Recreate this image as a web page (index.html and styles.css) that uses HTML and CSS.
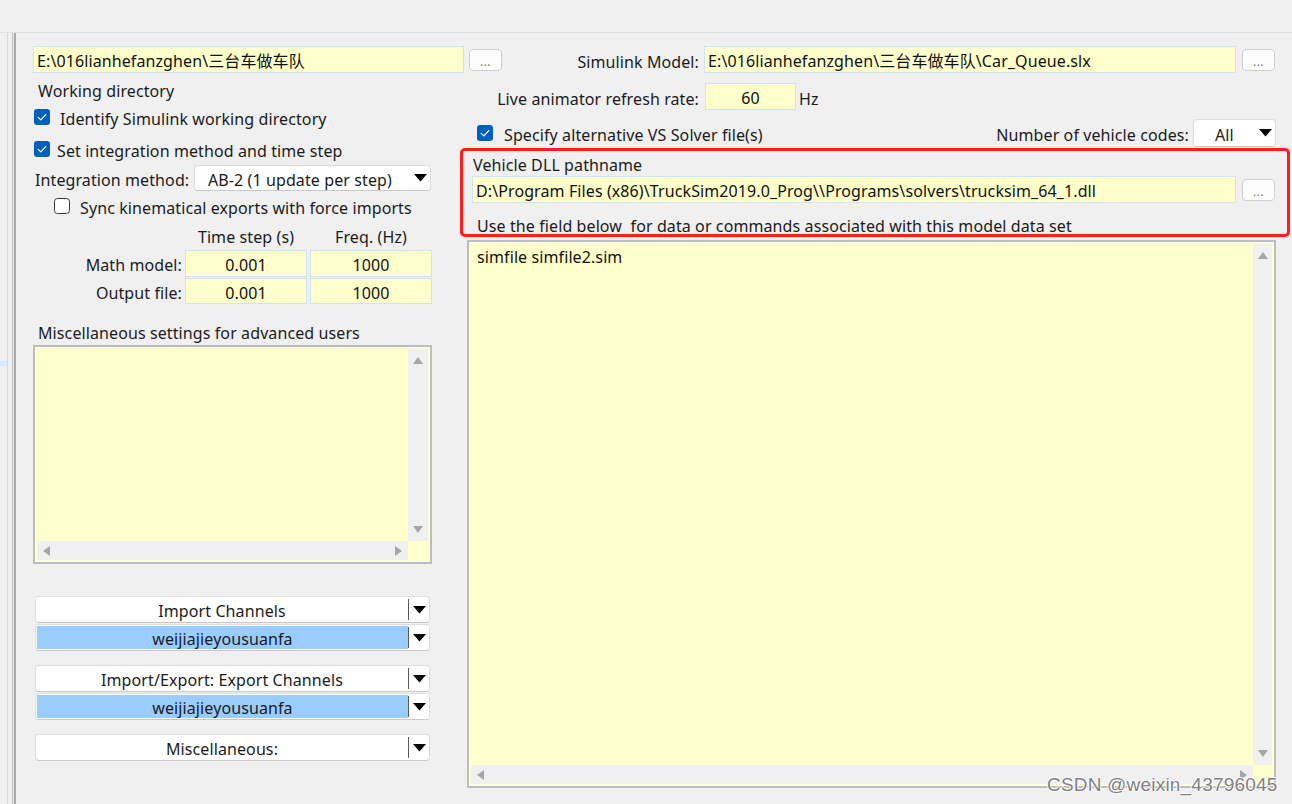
FILE: index.html
```html
<!DOCTYPE html>
<html>
<head>
<meta charset="utf-8">
<title>Model settings</title>
<link rel="stylesheet" href="styles.css">
</head>
<body>
<div class="topbar"></div>
<div class="main">
  <div class="strip"><div class="strip-sel"></div></div>
  <div class="content">
    <div class="col-left">
      <div class="row-path">
        <div class="field path-left">E:\016lianhefanzghen\三台车做车队</div>
        <div class="btn">...</div>
      </div>
      <div class="label wd">Working directory</div>
      <div class="check-row c1">
        <svg class="cb" width="16" height="16" viewBox="0 0 16 16"><rect x="0" y="0" width="16" height="16" rx="3" fill="#005fb8"/><path d="M4.2 8.4 L6.8 10.9 L11.8 5.6" fill="none" stroke="#fff" stroke-width="1.3" stroke-linecap="round" stroke-linejoin="round"/></svg>
        <span class="ct ct1">Identify Simulink working directory</span>
      </div>
      <div class="check-row c2">
        <svg class="cb" width="16" height="16" viewBox="0 0 16 16"><rect x="0" y="0" width="16" height="16" rx="3" fill="#005fb8"/><path d="M4.2 8.4 L6.8 10.9 L11.8 5.6" fill="none" stroke="#fff" stroke-width="1.3" stroke-linecap="round" stroke-linejoin="round"/></svg>
        <span class="ct ct2">Set integration method and time step</span>
      </div>
      <div class="int-row">
        <span class="int-label">Integration method:</span>
        <div class="combo int-combo">
          <span class="combo-text">AB-2 (1 update per step)</span>
          <svg class="arrow" width="13" height="8" viewBox="0 0 13 8"><polygon points="0,0 13,0 6.5,7.5" fill="#000"/></svg>
        </div>
      </div>
      <div class="check-row sync">
        <svg class="cb" width="16" height="16" viewBox="0 0 16 16"><rect x="0.5" y="0.5" width="15" height="15" rx="3" fill="#fff" stroke="#3a3a3a" stroke-width="1"/></svg>
        <span class="ct ct3">Sync kinematical exports with force imports</span>
      </div>
      <div class="ts-grid ts-head">
        <span></span>
        <span class="ts-h">Time step (s)</span>
        <span class="ts-h">Freq. (Hz)</span>
      </div>
      <div class="ts-grid ts-row r-math">
        <span class="ts-label">Math model:</span>
        <div class="field num">0.001</div>
        <div class="field num">1000</div>
      </div>
      <div class="ts-grid ts-row r-out">
        <span class="ts-label">Output file:</span>
        <div class="field num">0.001</div>
        <div class="field num">1000</div>
      </div>
      <div class="label misc-label">Miscellaneous settings for advanced users</div>
      <div class="textbox tb-left">
        <div class="tb-text"></div>
        <div class="vscroll">
          <svg width="10" height="7" viewBox="0 0 10 7"><polygon points="0,7 10,7 5,0" fill="#a6a6a6"/></svg>
          <svg width="10" height="7" viewBox="0 0 10 7"><polygon points="0,0 10,0 5,7" fill="#a6a6a6"/></svg>
        </div>
        <div class="hscroll">
          <svg width="7" height="10" viewBox="0 0 7 10"><polygon points="7,0 7,10 0,5" fill="#a6a6a6"/></svg>
          <svg width="7" height="10" viewBox="0 0 7 10"><polygon points="0,0 0,10 7,5" fill="#a6a6a6"/></svg>
        </div>
        <div class="corner"></div>
      </div>
      <div class="dd-group g1">
        <div class="dd">
          <span class="dd-main">Import Channels</span>
          <span class="dd-div"></span>
          <span class="dd-arrow"><svg width="13" height="8" viewBox="0 0 13 8"><polygon points="0,0 13,0 6.5,7.5" fill="#000"/></svg></span>
        </div>
        <div class="dd">
          <span class="dd-main sel">weijiajieyousuanfa</span>
          <span class="dd-div"></span>
          <span class="dd-arrow"><svg width="13" height="8" viewBox="0 0 13 8"><polygon points="0,0 13,0 6.5,7.5" fill="#000"/></svg></span>
        </div>
      </div>
      <div class="dd-group g2">
        <div class="dd">
          <span class="dd-main">Import/Export: Export Channels</span>
          <span class="dd-div"></span>
          <span class="dd-arrow"><svg width="13" height="8" viewBox="0 0 13 8"><polygon points="0,0 13,0 6.5,7.5" fill="#000"/></svg></span>
        </div>
        <div class="dd">
          <span class="dd-main sel">weijiajieyousuanfa</span>
          <span class="dd-div"></span>
          <span class="dd-arrow"><svg width="13" height="8" viewBox="0 0 13 8"><polygon points="0,0 13,0 6.5,7.5" fill="#000"/></svg></span>
        </div>
      </div>
      <div class="dd-group g3">
        <div class="dd">
          <span class="dd-main">Miscellaneous:</span>
          <span class="dd-div"></span>
          <span class="dd-arrow"><svg width="13" height="8" viewBox="0 0 13 8"><polygon points="0,0 13,0 6.5,7.5" fill="#000"/></svg></span>
        </div>
      </div>
    </div>

    <div class="col-right">
      <div class="r-row r1">
        <span class="r-label">Simulink Model:</span>
        <div class="field model">E:\016lianhefanzghen\三台车做车队\Car_Queue.slx</div>
        <div class="btn">...</div>
      </div>
      <div class="r-row r2">
        <span class="r-label">Live animator refresh rate:</span>
        <div class="field rate">60</div>
        <span class="hz">Hz</span>
      </div>
      <div class="r-row r3">
        <svg class="cb" width="16" height="16" viewBox="0 0 16 16"><rect x="0" y="0" width="16" height="16" rx="3" fill="#005fb8"/><path d="M4.2 8.4 L6.8 10.9 L11.8 5.6" fill="none" stroke="#fff" stroke-width="1.3" stroke-linecap="round" stroke-linejoin="round"/></svg>
        <span class="ct ct4">Specify alternative VS Solver file(s)</span>
        <span class="ct nvc">Number of vehicle codes:</span>
        <div class="combo all-combo">
          <span class="combo-text">All</span>
          <svg class="arrow" width="13" height="8" viewBox="0 0 13 8"><polygon points="0,0 13,0 6.5,7.5" fill="#000"/></svg>
        </div>
      </div>
      <div class="redbox">
        <div class="dll-label">Vehicle DLL pathname</div>
        <div class="dll-row">
          <div class="field dll">D:\Program Files (x86)\TruckSim2019.0_Prog\\Programs\solvers\trucksim_64_1.dll</div>
          <div class="btn">...</div>
        </div>
        <div class="use-label">Use the field below&nbsp; for data or commands associated with this model data set</div>
      </div>
      <div class="textbox tb-right">
        <div class="tb-text">simfile simfile2.sim</div>
        <div class="vscroll">
          <svg width="10" height="7" viewBox="0 0 10 7"><polygon points="0,7 10,7 5,0" fill="#a6a6a6"/></svg>
          <svg width="10" height="7" viewBox="0 0 10 7"><polygon points="0,0 10,0 5,7" fill="#a6a6a6"/></svg>
        </div>
        <div class="hscroll">
          <svg width="7" height="10" viewBox="0 0 7 10"><polygon points="7,0 7,10 0,5" fill="#a6a6a6"/></svg>
          <svg width="7" height="10" viewBox="0 0 7 10"><polygon points="0,0 0,10 7,5" fill="#a6a6a6"/></svg>
        </div>
        <div class="corner"></div>
      </div>
    </div>
  </div>
</div>
<div class="watermark">CSDN @weixin_43796045</div>
</body>
</html>
```
FILE: styles.css
```css
* { box-sizing: border-box; }
html, body { margin: 0; padding: 0; }
body {
  width: 1292px;
  height: 804px;
  overflow: hidden;
  background: #f0f0f0;
  font-family: "Noto Sans", "Noto Sans CJK SC", "Open Sans", sans-serif;
  font-size: 16px;
  letter-spacing: 0.1px;
  color: #1b1b1b;
  position: relative;
}
.topbar {
  height: 33px;
  border-bottom: 1px solid #e1e1e1;
  background: #f0f0f0;
}
.main {
  display: flex;
  height: 771px;
}
.strip {
  width: 16px;
  flex: none;
  position: relative;
  background: linear-gradient(to right, #f0f0f0 0 7px, #d8d8d8 7px 8px, #f0f0f0 8px 12px, #c4c4c4 12px 13px, #e4e4e4 13px 14px, #a9a9a9 14px 16px);
}
.strip-sel {
  position: absolute;
  left: 0;
  top: 328px;
  width: 7px;
  height: 5px;
  background: #d3eafc;
}
.content {
  flex: 1;
  padding: 13px 0 0 17px;
  display: grid;
  grid-template-columns: 427px 830px;
  align-items: start;
}
.col-left, .col-right { display: flex; flex-direction: column; }

.field {
  background: #ffffcc;
  border: 1px solid #cde4f5;
  height: 27px;
  line-height: 25px;
  padding-top: 2px;
  padding-left: 3px;
  white-space: nowrap;
  overflow: hidden;
  color: #111;
}
.btn {
  width: 33px;
  height: 22px;
  margin-top: 3px;
  flex: none;
  background: #fdfdfd;
  border: 1px solid #cfcfcf;
  border-radius: 4px;
  color: #777;
  font-size: 12px;
  line-height: 24px;
  text-align: center;
  letter-spacing: 0.5px;
}
.label { height: 20px; line-height: 22px; white-space: nowrap; }
.check-row { display: flex; align-items: center; height: 20px; white-space: nowrap; }
.ct { padding-top: 3px; }
.cb { flex: none; }

/* left column */
.row-path { display: flex; gap: 5px; width: 469px; }
.path-left { width: 431px; }
.wd { margin-top: 7px; padding-left: 5px; }
.c1 { margin-top: 7px; padding-left: 1px; }
.ct1 { margin-left: 10px; }
.c2 { margin-top: 12px; padding-left: 1px; }
.ct2 { margin-left: 7px; }
.int-row { margin-top: 6px; display: flex; align-items: center; height: 26px; white-space: nowrap; }
.int-label { width: 161px; flex: none; padding-left: 2px; padding-top: 3px; }
.combo {
  display: flex;
  align-items: center;
  background: #fff;
  border: 1px solid #dcdcdc;
  border-bottom-color: #c9c9c9;
  border-radius: 4px;
  height: 26px;
}
.combo-text { padding-top: 3px; }
.int-combo { width: 237px; flex: none; padding-left: 13px; padding-right: 3px; }
.int-combo .combo-text { flex: 1; }
.sync { margin-top: 5px; padding-left: 21px; }
.ct3 { margin-left: 10px; }
.ts-grid {
  display: grid;
  grid-template-columns: 149px 122px 122px;
  column-gap: 3px;
  width: 402px;
}
.ts-head { margin-top: 10px; height: 20px; line-height: 22px; }
.ts-h { text-align: center; }
.ts-row { align-items: center; }
.ts-label { text-align: right; padding-top: 3px; white-space: nowrap; }
.r-math { margin-top: 4px; }
.r-math .field { height: 27px; }
.r-out { margin-top: 1px; }
.r-out .field { height: 26px; line-height: 24px; }
.num { text-align: center; padding-left: 0; }
.misc-label { margin-top: 18px; padding-left: 5px; }

.textbox {
  display: grid;
  border: 2px solid #bdbdbd;
  box-shadow: inset 0 0 0 1px #ffffff;
  background: #ffffcc;
  padding: 2px;
}
.tb-left {
  margin-top: 3px;
  width: 399px;
  height: 219px;
  grid-template-columns: 1fr 20px;
  grid-template-rows: 1fr 19px;
}
.tb-text { padding: 1px 5px; line-height: 20px; color: #111; }
.vscroll {
  background: #f0f0f0;
  display: flex;
  flex-direction: column;
  justify-content: space-between;
  align-items: center;
  padding: 8px 0 8px;
}
.hscroll {
  background: #f0f0f0;
  display: flex;
  justify-content: space-between;
  align-items: center;
  padding: 0 6px 0 6px;
}
.corner { background: #ffffcc; }

.dd-group { display: flex; flex-direction: column; gap: 1px; width: 395px; margin-left: 2px; }
.g1 { margin-top: 32px; }
.g2 { margin-top: 14px; }
.g3 { margin-top: 14px; }
.dd {
  display: flex;
  height: 27px;
  background: #fff;
  border: 1px solid #dedede;
  border-bottom-color: #c8c8c8;
  border-radius: 4px;
}
.dd-main {
  flex: 1;
  text-align: center;
  line-height: 28px;
  white-space: nowrap;
  overflow: hidden;
  color: #1b1b1b;
}
.dd-main.sel { background: #99ccff; margin: 1px 0 1px 1px; line-height: 26px; }
.dd-div { width: 1px; background: #5a5a5a; margin: 2px 0; }
.dd-arrow { width: 20px; display: flex; align-items: center; justify-content: center; }

/* right column */
.r-row { display: flex; align-items: center; white-space: nowrap; }
.r1 { height: 27px; align-items: flex-start; }
.r-label { width: 239px; text-align: right; flex: none; }
.r1 .r-label { line-height: 27px; padding-top: 3px; }
.r2 .r-label { padding-top: 4px; }
.model { width: 532px; margin-left: 5px; }
.r1 .btn { margin-left: 6px; }
.r2 { margin-top: 10px; height: 27px; }
.rate { width: 91px; margin-left: 6px; text-align: center; padding-left: 0; }
.hz { margin-left: 3px; padding-top: 4px; }
.r3 { margin-top: 9px; height: 28px; padding-left: 17px; }
.ct4 { margin-left: 11px; padding-top: 4px; }
.nvc { margin-left: auto; padding-top: 4px; }
.all-combo { width: 83px; height: 28px; margin-left: 4px; margin-right: 14px; padding-left: 21px; padding-right: 3px; }
.all-combo .combo-text { flex: 1; }

.redbox {
  margin-top: 1px;
  height: 89px;
  border: 3px solid #ff1c1c;
  border-radius: 5px;
  padding: 2px 0 0 9px;
}
.dll-label { height: 20px; line-height: 24px; padding-left: 1px; }
.dll-row { display: flex; gap: 6px; margin-top: 3px; }
.dll { width: 764px; }
.use-label { margin-top: 13px; height: 18px; line-height: 21px; padding-left: 5px; white-space: nowrap; }

.tb-right {
  margin-top: 3px;
  margin-left: 7px;
  width: 809px;
  height: 548px;
  grid-template-columns: 1fr 19px;
  grid-template-rows: 1fr 19px;
}
.tb-right .tb-text { padding: 3px 6px; }

.watermark {
  position: absolute;
  left: 1047px;
  top: 774px;
  font-family: "Liberation Sans", Arial, sans-serif;
  font-size: 19px;
  letter-spacing: 0.2px;
  color: #808080;
  text-shadow: 0 0 1px #fff, 1px 0 0 #fff, -1px 0 0 #fff, 0 1px 0 #fff, 0 -1px 0 #fff;
  white-space: nowrap;
}
```
